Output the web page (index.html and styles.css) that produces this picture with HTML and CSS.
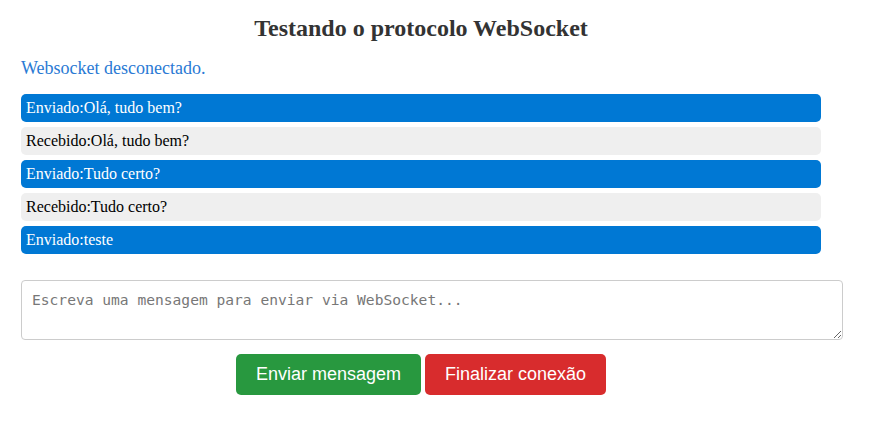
FILE: index.html
```
<!DOCTYPE html>
<html lang="pt-BR">
<head>
<meta charset="utf-8">
<title>Testando o protocolo WebSocket</title>
<link rel="stylesheet" href="styles.css">
</head>
<body>
<div class="container">
  <h1 class="title">Testando o protocolo WebSocket</h1>
  <p class="status">Websocket desconectado.</p>
  <ul class="messages">
    <li class="msg sent">Enviado:Olá, tudo bem?</li>
    <li class="msg received">Recebido:Olá, tudo bem?</li>
    <li class="msg sent">Enviado:Tudo certo?</li>
    <li class="msg received">Recebido:Tudo certo?</li>
    <li class="msg sent">Enviado:teste</li>
  </ul>
  <textarea class="input" placeholder="Escreva uma mensagem para enviar via WebSocket..."></textarea>
  <div class="actions">
    <button class="btn btn-send">Enviar mensagem</button>
    <button class="btn btn-close">Finalizar conexão</button>
  </div>
</div>
</body>
</html>
```
FILE: styles.css
```
html, body {
  margin: 0;
  padding: 0;
  background: #fff;
}
body {
  font-family: "Liberation Serif", "Times New Roman", serif;
  padding: 0 21px;
}
.container {
  width: 800px;
}
.title {
  font-size: 24px;
  font-weight: bold;
  color: #333;
  text-align: center;
  margin: 14px 0 0;
  line-height: 28px;
}
.status {
  color: #2a7ad4;
  font-size: 18px;
  margin: 16px 0 0;
  line-height: 20px;
}
.messages {
  list-style: none;
  margin: 16px 0 0;
  padding: 0;
}
.msg {
  height: 28px;
  line-height: 28px;
  padding: 0 5px;
  margin-bottom: 5px;
  border-radius: 5px;
  font-size: 16px;
}
.sent {
  background: #0078d4;
  color: #fff;
}
.received {
  background: #efefef;
  color: #000;
}
.input {
  display: block;
  width: 800px;
  height: 38px;
  padding: 10px;
  margin-top: 26px;
  border: 1px solid #ccc;
  border-radius: 4px;
  font-family: "DejaVu Sans Mono", monospace;
  font-size: 14.6px;
  line-height: 18px;
  resize: vertical;
}
.input::placeholder {
  color: #777;
}
.actions {
  margin-top: 14px;
  text-align: center;
}
.btn {
  font-family: "Liberation Sans", Arial, sans-serif;
  font-size: 18px;
  color: #fff;
  border: none;
  border-radius: 5px;
  padding: 10px 20px;
  height: 41px;
  cursor: pointer;
}
.btn-send {
  background: #28983f;
}
.btn-close {
  background: #d82c2d;
}
```
